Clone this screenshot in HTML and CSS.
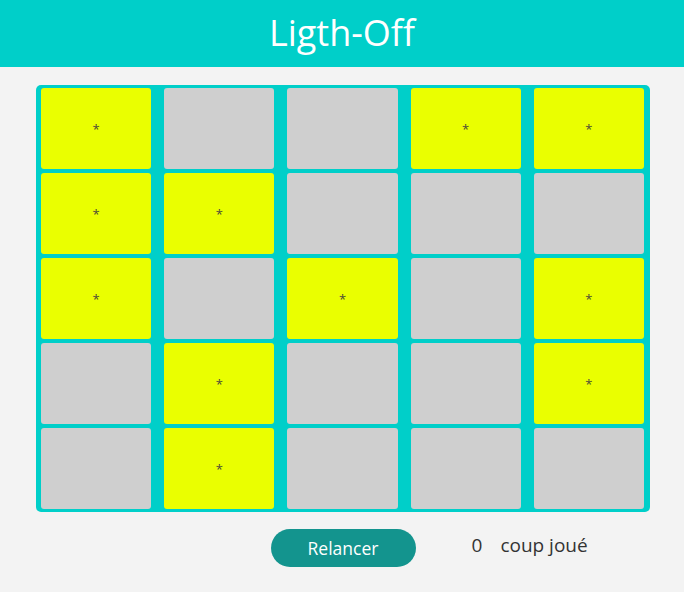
FILE: index.html
```html
<!DOCTYPE html>
<html lang="fr">
<head>
    <meta charset="UTF-8">
    <meta name="viewport" content="width=device-width, initial-scale=1.0">
    <title>Ligth-Off</title>
    <link rel="stylesheet" href="styles.css">
</head>
<body>

<header>
    <h1>Ligth-Off</h1>
</header>

<div class="container">
    <div class="board">
        <div class="cell on">*</div>
        <div class="cell"></div>
        <div class="cell"></div>
        <div class="cell on">*</div>
        <div class="cell on">*</div>

        <div class="cell on">*</div>
        <div class="cell on">*</div>
        <div class="cell"></div>
        <div class="cell"></div>
        <div class="cell"></div>

        <div class="cell on">*</div>
        <div class="cell"></div>
        <div class="cell on">*</div>
        <div class="cell"></div>
        <div class="cell on">*</div>

        <div class="cell"></div>
        <div class="cell on">*</div>
        <div class="cell"></div>
        <div class="cell"></div>
        <div class="cell on">*</div>

        <div class="cell"></div>
        <div class="cell on">*</div>
        <div class="cell"></div>
        <div class="cell"></div>
        <div class="cell"></div>
    </div>

    <div class="controls">
        <button id="restart">Relancer</button>
        <p class="counter"><span id="moves">0</span><span>coup joué</span></p>
    </div>
</div>

</body>
</html>
```

FILE: styles.css
```css
body {
    font-family: "Open Sans", "Noto Sans", sans-serif;
    background-color: #f3f3f3;
    margin: 0;
    padding: 0;
}
header {
    background-color: #00cfc9;
    color: #fff;
    height: 67px;
    display: flex;
    align-items: center;
    justify-content: center;
}
header h1 {
    margin: 0;
    font-size: 36px;
    font-weight: 400;
    padding-bottom: 2px;
}
.container {
    width: 614px;
    margin: 18px auto 0 36px;
}
.board {
    background-color: #00cfc9;
    border-radius: 5px;
    padding: 3px 6px 3px 5px;
    height: 427px;
    box-sizing: border-box;
    display: grid;
    grid-template-columns: repeat(5, 1fr);
    grid-template-rows: repeat(5, 1fr);
    column-gap: 13px;
    row-gap: 4px;
}
.cell {
    background-color: #cfcfcf;
    border-radius: 3px;
    display: flex;
    align-items: center;
    justify-content: center;
    font-size: 13px;
    color: #4a4a3a;
}
.cell.on {
    background-color: #eaff00;
}
.controls {
    display: grid;
    grid-template-columns: 1fr auto 1fr;
    align-items: center;
    margin-top: 17px;
}
button {
    grid-column: 2;
    width: 145px;
    height: 38px;
    border: none;
    border-radius: 19px;
    background-color: #13948e;
    color: #fff;
    font-family: inherit;
    font-size: 17.5px;
    cursor: pointer;
}
.counter {
    margin: 0 0 6px 56px;
    font-size: 19px;
    color: #333;
    display: flex;
    gap: 18px;
}
```
